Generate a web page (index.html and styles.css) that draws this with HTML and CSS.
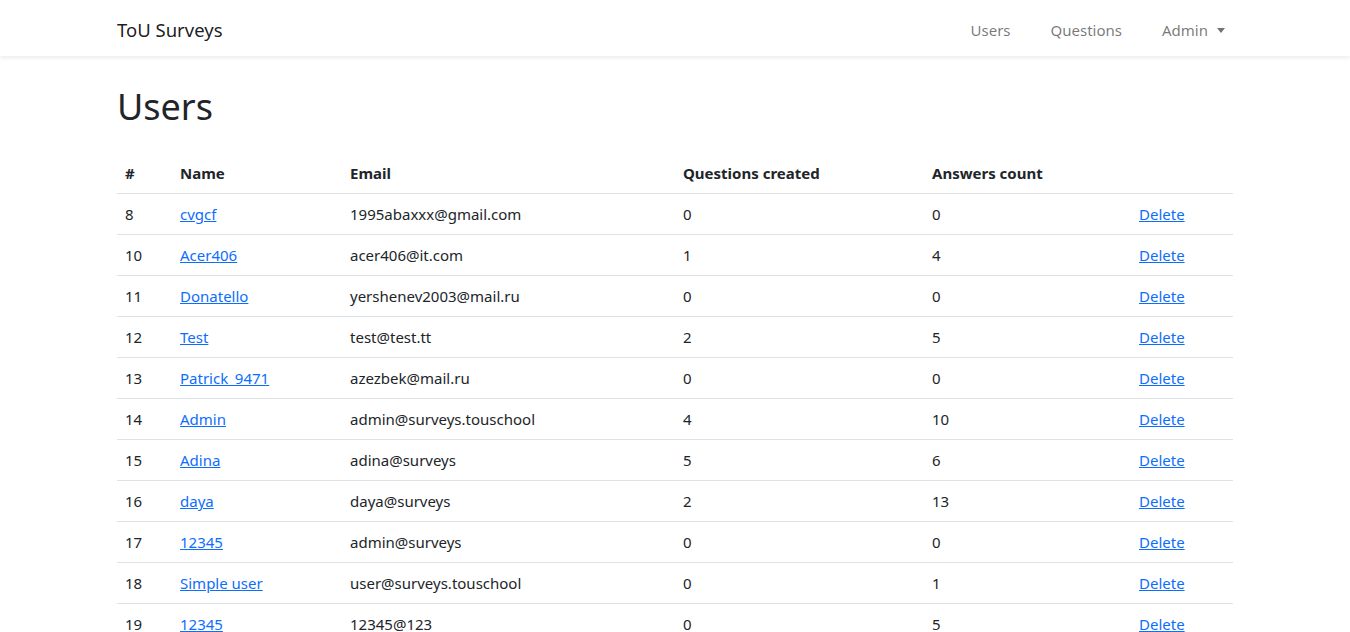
FILE: index.html
```html
<!DOCTYPE html>
<html lang="en">
<head>
<meta charset="utf-8">
<title>Users - ToU Surveys</title>
<link rel="stylesheet" href="styles.css">
</head>
<body>
<nav class="navbar">
  <div class="container nav-inner">
    <a class="brand" href="#">ToU Surveys</a>
    <ul class="nav-links">
      <li><a href="#">Users</a></li>
      <li><a href="#">Questions</a></li>
      <li><a href="#" class="dropdown">Admin</a></li>
    </ul>
  </div>
</nav>
<main class="container">
  <h1 class="title">Users</h1>
  <table class="users">
    <colgroup>
      <col class="c-id"><col class="c-name"><col class="c-email"><col class="c-q"><col class="c-a"><col class="c-act">
    </colgroup>
    <thead>
      <tr><th>#</th><th>Name</th><th>Email</th><th>Questions created</th><th>Answers count</th><th></th></tr>
    </thead>
    <tbody>
      <tr><td>8</td><td><a href="#">cvgcf</a></td><td>1995abaxxx@gmail.com</td><td>0</td><td>0</td><td><a href="#">Delete</a></td></tr>
      <tr><td>10</td><td><a href="#">Acer406</a></td><td>acer406@it.com</td><td>1</td><td>4</td><td><a href="#">Delete</a></td></tr>
      <tr><td>11</td><td><a href="#">Donatello</a></td><td>yershenev2003@mail.ru</td><td>0</td><td>0</td><td><a href="#">Delete</a></td></tr>
      <tr><td>12</td><td><a href="#">Test</a></td><td>test@test.tt</td><td>2</td><td>5</td><td><a href="#">Delete</a></td></tr>
      <tr><td>13</td><td><a href="#">Patrick_9471</a></td><td>azezbek@mail.ru</td><td>0</td><td>0</td><td><a href="#">Delete</a></td></tr>
      <tr><td>14</td><td><a href="#">Admin</a></td><td>admin@surveys.touschool</td><td>4</td><td>10</td><td><a href="#">Delete</a></td></tr>
      <tr><td>15</td><td><a href="#">Adina</a></td><td>adina@surveys</td><td>5</td><td>6</td><td><a href="#">Delete</a></td></tr>
      <tr><td>16</td><td><a href="#">daya</a></td><td>daya@surveys</td><td>2</td><td>13</td><td><a href="#">Delete</a></td></tr>
      <tr><td>17</td><td><a href="#">12345</a></td><td>admin@surveys</td><td>0</td><td>0</td><td><a href="#">Delete</a></td></tr>
      <tr><td>18</td><td><a href="#">Simple user</a></td><td>user@surveys.touschool</td><td>0</td><td>1</td><td><a href="#">Delete</a></td></tr>
      <tr><td>19</td><td><a href="#">12345</a></td><td>12345@123</td><td>0</td><td>5</td><td><a href="#">Delete</a></td></tr>
    </tbody>
  </table>
</main>
</body>
</html>
```

FILE: styles.css
```css
* { box-sizing: border-box; }
html, body { margin: 0; padding: 0; }
body {
  font-family: "Noto Sans", "Open Sans", sans-serif;
  font-size: 15px;
  line-height: 24px;
  color: #212529;
  background: #fff;
}
a { color: #0d6efd; }
.container {
  width: 1140px;
  margin: 0 auto;
  padding: 0 12px;
}
.navbar {
  background: #fff;
  height: 56px;
  box-shadow: 0 2px 4px rgba(0,0,0,0.08);
  position: relative;
}
.nav-inner {
  display: flex;
  align-items: center;
  justify-content: space-between;
  height: 56px;
  padding-top: 3px;
}
.brand {
  font-size: 18.5px;
  color: rgba(0,0,0,0.9);
  text-decoration: none;
  line-height: 30px;
}
.nav-links {
  list-style: none;
  margin: 0;
  padding: 0;
  display: flex;
  gap: 24px;
}
.nav-links a {
  display: block;
  padding: 8px;
  color: rgba(0,0,0,0.55);
  text-decoration: none;
}
.dropdown::after {
  content: "";
  display: inline-block;
  margin-left: 9px;
  vertical-align: 3px;
  border-top: 5px solid;
  border-left: 4.5px solid transparent;
  border-right: 4.5px solid transparent;
}
.title {
  font-size: 36px;
  font-weight: 400;
  line-height: 48px;
  margin: 27px 0 22px;
}
.users {
  width: 100%;
  border-collapse: collapse;
  table-layout: fixed;
}
.c-id { width: 55px; }
.c-name { width: 170px; }
.c-email { width: 333px; }
.c-q { width: 249px; }
.c-a { width: 207px; }
.c-act { width: 102px; }
.users th, .users td {
  padding: 8px;
  text-align: left;
  border-bottom: 1px solid #dee2e6;
  white-space: nowrap;
}
.users th { font-weight: 700; }
```
